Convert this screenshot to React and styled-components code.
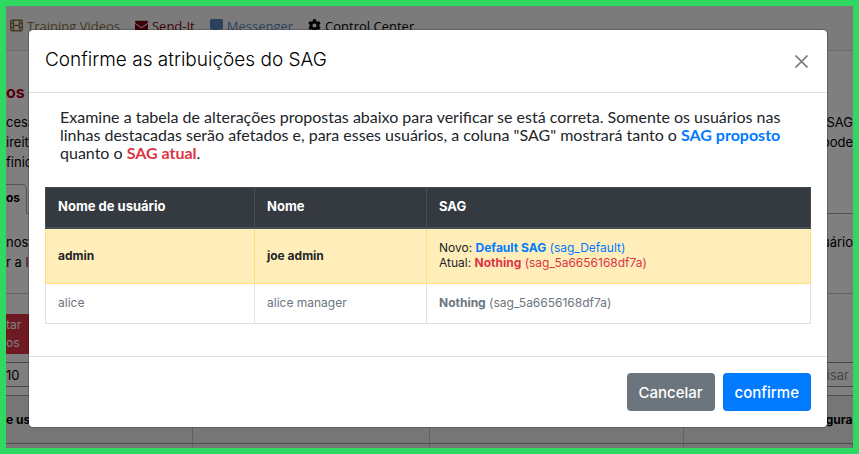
import React from "react";
import styled, { createGlobalStyle } from "styled-components";
import { FaEnvelope, FaCog } from "react-icons/fa";
import { FaMessage } from "react-icons/fa6";

const GlobalStyle = createGlobalStyle`
  *, *::before, *::after { box-sizing: border-box; }
  body { margin: 0; font-family: Inter, "Open Sans", sans-serif; color: #212529; }
  p, h1, h2 { margin: 0; }
  button, input, select { font: inherit; }
`;

const Frame = styled.div`
  position: relative;
  height: 100vh;
  border: 6px solid #2fd860;
  overflow: hidden;
`;

const Page = styled.div`
  background: #fff;
  font-size: 13px;
  color: #000;
`;

const Nav = styled.nav`
  display: flex;
  gap: 15px;
  height: 45px;
  padding: 9px 4px 0;
  background: #f7f7f7;
  border-bottom: 1px solid #dcdcdc;
`;

const NavLink = styled.a`
  display: flex;
  align-items: flex-start;
  gap: 4px;
  font: 13px/22px "Open Sans", sans-serif;
  color: ${(p) => p.$color};
  text-decoration: none;
  white-space: nowrap;
  svg { width: 13px; height: 13px; margin-top: 4px; }
`;

const PageTitle = styled.h1`
  height: 61px;
  padding-top: 29px;
  font-size: 16px;
  line-height: 24px;
  font-weight: 700;
  color: #b0001c;
`;

const Line = styled.p`
  display: flex;
  justify-content: space-between;
  line-height: 20px;
`;

const Accent = styled.span`
  color: #b0001c;
`;

const Tabs = styled.div`
  display: flex;
  align-items: flex-end;
  height: 42px;
  margin-bottom: 18px;
`;

const Tab = styled.button`
  width: 21px;
  height: 30px;
  padding: 0 0 4px;
  border: 1px solid #a8a8a8;
  border-width: 1px 1px 0 0;
  border-radius: 0 5px 0 0;
  background: none;
  font-size: 12px;
  font-weight: 700;
  text-align: left;
`;

const TabRule = styled.div`
  flex: 1;
  border-bottom: 1px solid #a8a8a8;
`;

const Toolbar = styled.div`
  margin-top: 21px;
  padding-top: 20px;
  border-top: 1px solid #c8c8c8;
`;

const ExportButton = styled.button`
  display: block;
  width: 40px;
  height: 40px;
  padding: 0;
  border: 0;
  background: #dc3545;
  color: #fff;
  font-size: 12px;
  line-height: 18px;
  text-align: left;
`;

const Filters = styled.div`
  display: flex;
  justify-content: space-between;
  margin: 8px 0 8px;
`;

const PageSize = styled.select`
  appearance: none;
  width: 60px;
  height: 25px;
  padding: 0;
  border: 1px solid #8e8e8e;
  border-left: 0;
  border-radius: 0;
  background: none;
`;

const Search = styled.input`
  width: 60px;
  height: 25px;
  padding: 0 4px;
  border: 1px solid #8e8e8e;
  border-right: 0;
  background: none;
  text-align: right;
  &::placeholder { color: #8e8e8e; }
`;

const UserTable = styled.table`
  width: 100%;
  table-layout: fixed;
  border-collapse: collapse;
  border-top: 1px solid #999;
  background: #ececec;
  th {
    height: 48px;
    padding: 0;
    border-bottom: 1px solid #999;
    border-right: 1px solid #c4c4c4;
    font-size: 12px;
    text-align: left;
  }
  th:last-child { text-align: right; border-right: 0; }
  td { height: 30px; border-right: 1px solid #c4c4c4; }
`;

const Col = styled.col`
  width: ${(p) => p.$width};
`;

const Backdrop = styled.div`
  position: absolute;
  inset: 0;
  padding: 23px 25px 20px 22px;
  background: rgba(0, 0, 0, 0.5);
`;

const Dialog = styled.section`
  background: #fff;
  border: 1px solid rgba(0, 0, 0, 0.2);
  background-clip: padding-box;
  border-radius: 5px;
`;

const DialogHeader = styled.header`
  display: flex;
  justify-content: space-between;
  align-items: flex-start;
  height: 63px;
  padding: 16px;
  border-bottom: 1px solid #dee2e6;
`;

const DialogTitle = styled.h2`
  font-size: 19px;
  line-height: 28px;
  font-weight: 300;
  color: #000;
`;

const CloseButton = styled.button`
  display: flex;
  margin-top: 6px;
  padding: 3px;
  border: 0;
  background: none;
  color: #7f7f7f;
`;

const DialogBody = styled.div`
  padding: 15px 16px;
`;

const Intro = styled.p`
  padding: 0 15px;
  font-family: Lato, Inter, sans-serif;
  font-size: 16px;
  line-height: 18px;
`;

const Strong = styled.strong`
  font-weight: 700;
  color: ${(p) => p.$color || "inherit"};
`;

const Tone = styled.span`
  color: ${(p) => p.$color};
`;

const Changes = styled.table`
  width: 100%;
  margin-top: 25px;
  table-layout: fixed;
  border-collapse: collapse;
  font-size: 12px;
  line-height: 15px;
  th, td { padding: 11px 12px 13px; text-align: left; border: 1px solid #dee2e6; }
  thead th {
    height: 40px;
    background: #343a40;
    color: #fff;
    border-color: #454d55;
    border-bottom-width: 2px;
  }
`;

const Row = styled.tr`
  height: ${(p) => (p.$changed ? 54 : 40)}px;
  background: ${(p) => (p.$changed ? "#ffeeba" : "#fff")};
  color: ${(p) => (p.$changed ? "#212529" : "#6c757d")};
  && td {
    border-color: ${(p) => (p.$changed ? "#ffdf7e" : "#dee2e6")};
  }
`;

const HeadRow = styled.tr`
  font-size: 13px;
`;

const DialogFooter = styled.footer`
  display: flex;
  justify-content: flex-end;
  gap: 8px;
  margin-top: 17px;
  padding: 16px;
  border-top: 1px solid #dee2e6;
`;

const Button = styled.button`
  height: 38px;
  padding: 0 12px;
  border: 0;
  border-radius: 4px;
  background: ${(p) => (p.$primary ? "#007bff" : "#6c757d")};
  color: #fff;
  font-size: 15px;
  font-weight: 500;
`;

const blue = "#007bff";
const red = "#dc3545";

function FilmIcon() {
  return (
    <svg viewBox="0 0 13 13" fill="none" stroke="currentColor" strokeWidth="1.4">
      <rect x="0.7" y="1.2" width="11.6" height="10.6" rx="1.2" />
      <path d="M3.5 1v11M9.5 1v11M3.5 6.5h6M1 4.5h2.5M1 8.5h2.5M9.5 4.5H12M9.5 8.5H12" />
    </svg>
  );
}

function CloseIcon() {
  return (
    <svg width="13" height="13" viewBox="0 0 13 13" stroke="currentColor" strokeWidth="1.7">
      <path d="M0.5 0.5l12 12M12.5 0.5l-12 12" />
    </svg>
  );
}

function UsersPage() {
  return (
    <Page>
      <Nav>
        <NavLink href="#videos" $color="#89703f"><FilmIcon />Training Videos</NavLink>
        <NavLink href="#send" $color="#780012"><FaEnvelope />Send-It</NavLink>
        <NavLink href="#messenger" $color="#5583bd"><FaMessage />Messenger</NavLink>
        <NavLink href="#control" $color="#000"><FaCog />Control Center</NavLink>
      </Nav>
      <PageTitle>os d</PageTitle>
      <Line><span>cess</span><span>SAG</span></Line>
      <Line><span>ireit</span><span>pode</span></Line>
      <Line>finid</Line>
      <Tabs><Tab>os</Tab><TabRule /></Tabs>
      <Line><span>nost</span><span>uário</span></Line>
      <Line><span>r a <Accent>l</Accent></span></Line>
      <Toolbar>
        <ExportButton>tar<br />os</ExportButton>
        <Filters>
          <PageSize aria-label="Linhas por página"><option>10</option></PageSize>
          <Search type="text" aria-label="Pesquisar" placeholder="isar" />
        </Filters>
        <UserTable>
          <colgroup>
            <Col $width="22%" /><Col $width="28%" /><Col $width="30%" /><Col $width="20%" />
          </colgroup>
          <thead><tr><th>e us</th><th /><th /><th>gura</th></tr></thead>
          <tbody><tr><td /><td /><td /><td /></tr></tbody>
        </UserTable>
      </Toolbar>
    </Page>
  );
}

export default function App() {
  return (
    <>
      <GlobalStyle />
      <Frame>
        <UsersPage />
        <Backdrop>
          <Dialog role="dialog" aria-modal="true" aria-labelledby="dialog-title">
            <DialogHeader>
              <DialogTitle id="dialog-title">Confirme as atribuições do SAG</DialogTitle>
              <CloseButton aria-label="Fechar"><CloseIcon /></CloseButton>
            </DialogHeader>
            <DialogBody>
              <Intro>
                Examine a tabela de alterações propostas abaixo para verificar se está correta. Somente os usuários nas
                linhas destacadas serão afetados e, para esses usuários, a coluna "SAG" mostrará tanto o{" "}
                <Strong $color={blue}>SAG proposto</Strong> quanto o <Strong $color={red}>SAG atual</Strong>.
              </Intro>
              <Changes>
                <colgroup><Col $width="209px" /><Col $width="172px" /><Col /></colgroup>
                <thead><HeadRow><th>Nome de usuário</th><th>Nome</th><th>SAG</th></HeadRow></thead>
                <tbody>
                  <Row $changed>
                    <td><Strong>admin</Strong></td>
                    <td><Strong>joe admin</Strong></td>
                    <td>
                      Novo: <Tone $color={blue}><Strong>Default SAG</Strong> (sag_Default)</Tone><br />
                      Atual: <Tone $color={red}><Strong>Nothing</Strong> (sag_5a6656168df7a)</Tone>
                    </td>
                  </Row>
                  <Row>
                    <td>alice</td>
                    <td>alice manager</td>
                    <td><Strong>Nothing</Strong> (sag_5a6656168df7a)</td>
                  </Row>
                </tbody>
              </Changes>
            </DialogBody>
            <DialogFooter>
              <Button>Cancelar</Button>
              <Button $primary>confirme</Button>
            </DialogFooter>
          </Dialog>
        </Backdrop>
      </Frame>
    </>
  );
}
